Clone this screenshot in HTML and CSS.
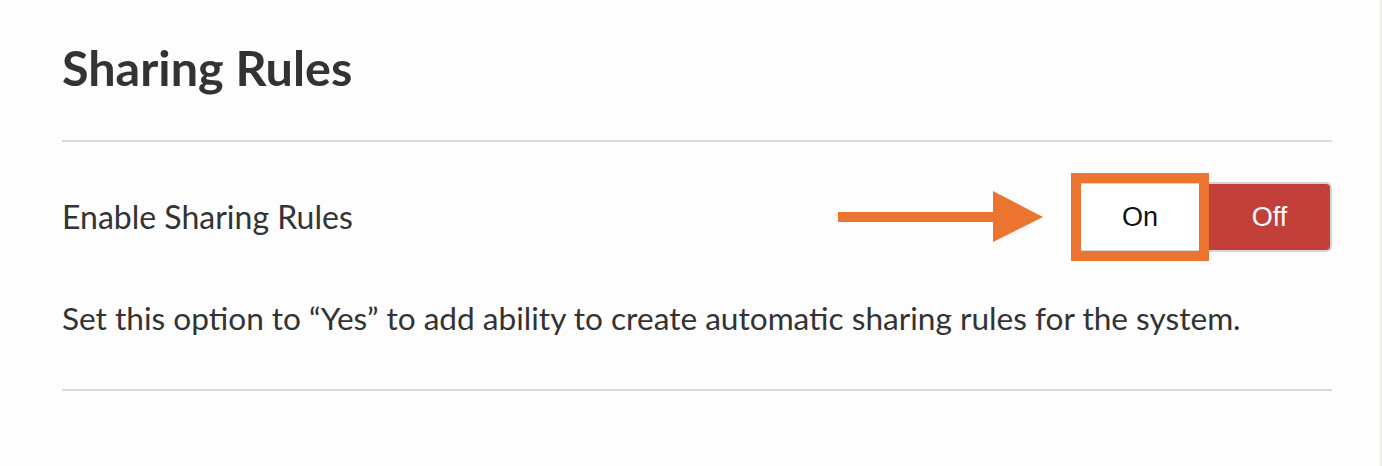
FILE: index.html
```html
<!DOCTYPE html>
<html lang="en">

<head>
    <meta charset="UTF-8">
    <meta name="viewport" content="width=device-width, initial-scale=1.0">
    <title>Sharing Rules</title>
    <link rel="stylesheet" href="styles.css">
</head>

<body>

    <div class="page">
        <h1 class="title">Sharing Rules</h1>
        <hr class="divider">

        <div class="setting-row">
            <span class="setting-label">Enable Sharing Rules</span>

            <div class="setting-control">
                <svg class="arrow" width="205" height="52" viewBox="0 0 205 52">
                    <rect x="0" y="21" width="158" height="10" fill="#ec7431" />
                    <polygon points="155,0 205,26 155,51" fill="#ec7431" />
                </svg>

                <div class="toggle">
                    <button class="toggle-btn toggle-on">On
                        <span class="highlight"></span>
                    </button>
                    <button class="toggle-btn toggle-off">Off</button>
                </div>
            </div>
        </div>

        <p class="setting-help">Set this option to “Yes” to add ability to create automatic sharing rules for the system.</p>
        <hr class="divider">
    </div>

</body>

</html>
```

FILE: styles.css
```css
html,
body {
    margin: 0;
    padding: 0;
    background: #fdfdfd;
}

.page {
    box-sizing: border-box;
    width: 100%;
    min-height: 466px;
    padding: 39px 48px 0 62px;
    border-right: 2px solid #ecece8;
    font-family: Lato, "Liberation Sans", sans-serif;
    color: #333333;
}

.title {
    margin: 0;
    font-size: 48.5px;
    line-height: 56px;
    font-weight: 700;
    color: #333333;
}

.divider {
    margin: 45px 0 0 0;
    border: 0;
    height: 2px;
    background: #dadada;
}

.setting-row {
    display: flex;
    align-items: center;
    justify-content: space-between;
    padding-top: 40px;
}

.setting-label {
    font-size: 32px;
    line-height: 40px;
}

.setting-control {
    display: flex;
    align-items: center;
    gap: 35px;
}

.arrow {
    display: block;
}

.toggle {
    display: flex;
    height: 70px;
}

.toggle-btn {
    position: relative;
    box-sizing: border-box;
    height: 70px;
    margin: 0;
    padding: 0;
    font-family: "Liberation Sans", Arial, sans-serif;
    font-size: 27px;
    border: 2px solid #d4d4d4;
    cursor: pointer;
}

.toggle-on {
    width: 131px;
    padding-right: 9px;
    background: #ffffff;
    color: #111111;
    border-right: 0;
    border-radius: 6px 0 0 6px;
}

.toggle-off {
    width: 123px;
    background: #c3403a;
    color: #ffffff;
    border-left: 0;
    border-radius: 0 6px 6px 0;
}

.highlight {
    position: absolute;
    top: -11px;
    left: -9px;
    right: 0;
    bottom: -11px;
    border: 10px solid #ec7431;
}

.setting-help {
    margin: 46px 0 0 0;
    font-size: 31.6px;
    line-height: 40px;
}

.setting-help + .divider {
    margin-top: 51px;
}
```
